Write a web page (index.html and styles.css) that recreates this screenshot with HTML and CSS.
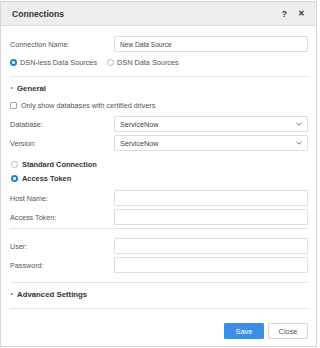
FILE: index.html
```html
<!DOCTYPE html>
<html>
<head>
<meta charset="utf-8">
<link rel="stylesheet" href="styles.css">
</head>
<body>
<div class="dialog">
  <div class="header">
    <span class="title">Connections</span>
    <span class="hicons"><span class="help">?</span><span class="close">&#x2715;</span></span>
  </div>
  <div class="body">
    <div class="row first">
      <span class="label">Connection Name:</span>
      <div class="input">New Data Source</div>
    </div>
    <div class="radios">
      <span class="opt"><span class="radio on"></span>DSN-less Data Sources</span>
      <span class="opt"><span class="radio"></span>DSN Data Sources</span>
    </div>
    <div class="sep s1"></div>
    <div class="section"><span class="caret"></span>General</div>
    <div class="check"><span class="box"></span>Only show databases with certified drivers</div>
    <div class="row r-db">
      <span class="label">Database:</span>
      <div class="input select">ServiceNow<svg class="chev" width="6" height="4" viewBox="0 0 6 4"><path d="M0.5 0.8 L3 3.2 L5.5 0.8" fill="none" stroke="#666" stroke-width="0.9"/></svg></div>
    </div>
    <div class="row">
      <span class="label">Version:</span>
      <div class="input select">ServiceNow<svg class="chev" width="6" height="4" viewBox="0 0 6 4"><path d="M0.5 0.8 L3 3.2 L5.5 0.8" fill="none" stroke="#666" stroke-width="0.9"/></svg></div>
    </div>
    <div class="bopt o1"><span class="radio"></span>Standard Connection</div>
    <div class="bopt o2"><span class="radio on"></span>Access Token</div>
    <div class="row r-host">
      <span class="label">Host Name:</span>
      <div class="input"></div>
    </div>
    <div class="row">
      <span class="label">Access Token:</span>
      <div class="input"></div>
    </div>
    <div class="sep s2"></div>
    <div class="row r-user">
      <span class="label">User:</span>
      <div class="input"></div>
    </div>
    <div class="row">
      <span class="label">Password:</span>
      <div class="input"></div>
    </div>
    <div class="sep s3"></div>
    <div class="section adv"><span class="caret"></span>Advanced Settings</div>
    <div class="sep s4"></div>
    <div class="footer">
      <button class="btn save">Save</button>
      <button class="btn cls">Close</button>
    </div>
  </div>
</div>
</body>
</html>
```

FILE: styles.css
```css
* { box-sizing: border-box; }
html, body { margin: 0; padding: 0; background: #fff; }
body {
  font-family: "Liberation Sans", Arial, sans-serif;
  font-size: 7.2px;
  color: #555;
  width: 320px;
  height: 348px;
  overflow: hidden;
}
.dialog {
  width: 317px;
  height: 346px;
  margin: 1px 0 0 0;
  border: 1px solid #d6d6d6;
  background: #fff;
}
.header {
  height: 24px;
  background: #eeeeee;
  border-bottom: 1px solid #dcdcdc;
  display: flex;
  align-items: center;
  justify-content: space-between;
  padding: 0 11px 0 11px;
}
.title {
  font-size: 8.6px;
  font-weight: bold;
  color: #333;
}
.hicons { display: flex; gap: 11px; align-items: center; color: #333; font-weight: bold; }
.help { font-size: 8.5px; }
.close { font-size: 7.5px; }
.body { padding: 0 8px 0 9px; }
.row {
  display: flex;
  align-items: center;
  height: 16px;
  margin-top: 3px;
}
.row.first { margin-top: 10px; }
.label { width: 104px; flex: none; color: #555; }
.input {
  flex: 1;
  height: 16px;
  border: 1px solid #dedede;
  border-radius: 1px;
  padding: 0 5px;
  display: flex;
  align-items: center;
  color: #444;
  font-size: 6.6px;
}
.select { font-size: 7.2px; justify-content: space-between; height: 15.5px; }
.chev { flex: none; margin-right: 0px; }
.radios {
  display: flex;
  gap: 10px;
  margin-top: 6px;
  height: 8px;
  align-items: center;
  font-size: 7.3px;
}
.opt { display: flex; align-items: center; gap: 3px; }
.radio {
  width: 7px;
  height: 7px;
  border-radius: 50%;
  border: 1px solid #b9b9b9;
  display: inline-block;
  flex: none;
  background: #fff;
}
.radio.on {
  border: none;
  background: radial-gradient(circle, #fff 0 1.2px, #1a7fe8 1.7px);
}
.sep { height: 1px; background: #e4e4e4; margin-right: 0; }
.s1 { margin-top: 10px; }
.section {
  display: flex;
  align-items: center;
  font-weight: bold;
  color: #333;
  font-size: 7.8px;
  height: 10px;
  margin-top: 6px;
  padding-left: 1px;
}
.caret {
  width: 0; height: 0;
  border-left: 2.2px solid #444;
  border-top: 1.8px solid transparent;
  border-bottom: 1.8px solid transparent;
  margin-right: 4px;
}
.check {
  display: flex;
  align-items: center;
  gap: 4px;
  margin-top: 8px;
  height: 8px;
  font-size: 7.2px;
}
.box {
  width: 7px; height: 7px;
  border: 1px solid #aaa;
  border-radius: 1px;
  flex: none;
}
.row.r-db { margin-top: 7px; }
.bopt {
  display: flex;
  align-items: center;
  gap: 4px;
  font-weight: bold;
  color: #333;
  height: 8px;
  font-size: 7.4px;
  padding-left: 1px;
}
.o1 { margin-top: 9px; }
.o2 { margin-top: 6px; }
.row.r-host { margin-top: 8px; }
.s2 { margin-top: 3px; }
.row.r-user { margin-top: 9px; }
.s3 { margin-top: 9px; }
.adv { margin-top: 6px; }
.s4 { margin-top: 9px; }
.footer {
  display: flex;
  justify-content: flex-end;
  gap: 4px;
  margin-top: 14px;
}
.btn {
  font-family: "Liberation Sans", Arial, sans-serif;
  font-size: 7.4px;
  height: 16px;
  width: 40px;
  border-radius: 1px;
  padding: 0;
}
.save { background: #3a8ee6; border: 1px solid #3a8ee6; color: #fff; }
.cls { background: #fff; border: 1px solid #d6d6d6; color: #555; }
```
